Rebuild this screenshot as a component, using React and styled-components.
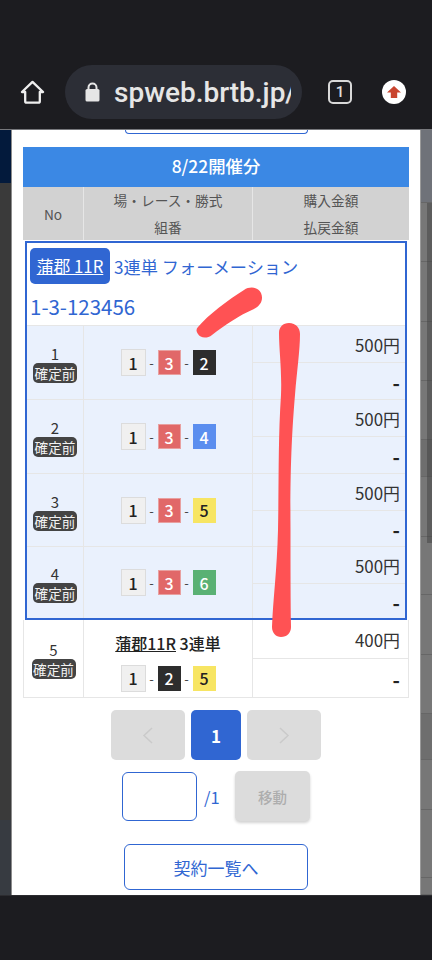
import React from "react";
import styled, { createGlobalStyle } from "styled-components";

const BLUE = "#3066d2";
const CJK = `"Noto Sans CJK JP", "Noto Sans", sans-serif`;

const boatColors = {
  1: { bg: "#f0f0f0", fg: "#222", line: "#dcdcdc" },
  2: { bg: "#2d2d2d", fg: "#fff", line: "#2d2d2d" },
  3: { bg: "#e16868", fg: "#fff", line: "#e8a0a0" },
  4: { bg: "#5b8eef", fg: "#fff", line: "#5b8eef" },
  5: { bg: "#f7e563", fg: "#222", line: "#f7e563" },
  6: { bg: "#5ab174", fg: "#fff", line: "#5ab174" }
};

const boxedRows = [
  { no: 1, boats: [1, 3, 2], height: 74 },
  { no: 2, boats: [1, 3, 4], height: 74 },
  { no: 3, boats: [1, 3, 5], height: 73 },
  { no: 4, boats: [1, 3, 6], height: 71 }
];

const rightBands = [
  { height: 73, tone: "#6f7279" },
  { height: 59 },
  { height: 60 },
  { height: 59 },
  { height: 59 },
  { height: 37, tone: "#6e6e6e" },
  { height: 60 },
  { height: 58 },
  { height: 60 },
  { height: 59 },
  { height: 46, tone: "#6e6e6e" },
  { height: 50 },
  { height: 68 },
  { height: 17 }
];

const GlobalStyle = createGlobalStyle`
  html, body {
    margin: 0;
    padding: 0;
    background: #1c1c20;
  }

  * {
    box-sizing: border-box;
  }
`;

const Boats = ({ boats }) => (
  <BoatRow>
    {boats.map((boat, index) => (
      <React.Fragment key={index}>
        {index > 0 && <Dash>-</Dash>}
        <Boat $color={boatColors[boat]} $first={boat === 1}>
          {boat}
        </Boat>
      </React.Fragment>
    ))}
  </BoatRow>
);

const Amounts = ({ price, topHeight, inset }) => (
  <AmountCol>
    <AmountCell $top $height={topHeight} $inset={inset}>
      {price}
    </AmountCell>
    <AmountCell $inset={inset}>
      <Minus>-</Minus>
    </AmountCell>
  </AmountCol>
);

const App = () => {
  return (
    <Page>
      <GlobalStyle />
      <TopBar>
        <IconSlot $width={25}>
          <svg width="26" height="26" viewBox="0 0 26 26" fill="none" stroke="#eee" strokeWidth="2.4" strokeLinejoin="round">
            <path d="M2 13 13 2.5 24 13h-3.4v9.5a1.5 1.5 0 0 1-1.5 1.5H6.9a1.5 1.5 0 0 1-1.5-1.5V13Z" />
          </svg>
        </IconSlot>
        <UrlPill>
          <svg width="15" height="20" viewBox="0 0 15 20">
            <path d="M3.5 8V5.5a4 4 0 0 1 8 0V8" fill="none" stroke="#e6e6e6" strokeWidth="2" />
            <rect x="0.5" y="7" width="14" height="12.5" rx="1.6" fill="#e6e6e6" />
          </svg>
          <UrlText>spweb.brtb.jp/</UrlText>
        </UrlPill>
        <TabCount>1</TabCount>
        <UpdateDot>
          <svg width="14" height="12" viewBox="0 0 14 12">
            <path d="M7 0 14 6.4H10.2V12H3.8V6.4H0Z" fill="#c9452f" />
          </svg>
        </UpdateDot>
      </TopBar>

      <Middle>
        <LeftGutter>
          <NavyBand />
          <GreyBand />
          <SlateBand />
        </LeftGutter>

        <Panel>
          <ClippedButton />
          <Table>
            <DateHead>8/22開催分</DateHead>
            <HeadRow>
              <HeadNo>No</HeadNo>
              <HeadMid>
                <HeadCell>場・レース・勝式</HeadCell>
                <HeadCell>組番</HeadCell>
              </HeadMid>
              <HeadAmount>
                <HeadCell>購入金額</HeadCell>
                <HeadCell>払戻金額</HeadCell>
              </HeadAmount>
            </HeadRow>

            <Highlight>
              <Summary>
                <SummaryLine>
                  <VenueChip>蒲郡 11R</VenueChip>
                  <BetType>3連単 フォーメーション</BetType>
                </SummaryLine>
                <BetNumbers>1-3-123456</BetNumbers>
              </Summary>
              {boxedRows.map(({ no, boats, height }) => (
                <Row key={no} $height={height} $tinted>
                  <NoCell $boxed>
                    <RowNo>{no}</RowNo>
                    <Status>確定前</Status>
                  </NoCell>
                  <MidCell>
                    <Boats boats={boats} />
                  </MidCell>
                  <Amounts price="500円" topHeight={37} inset={5} />
                </Row>
              ))}
            </Highlight>

            <Row $height={78} $closed>
              <NoCell>
                <RowNo>5</RowNo>
                <Status>確定前</Status>
              </NoCell>
              <MidCell $stacked>
                <PlainRace>
                  <u>蒲郡11R</u> 3連単
                </PlainRace>
                <Boats boats={[1, 2, 5]} />
              </MidCell>
              <Amounts price="400円" topHeight={39} inset={8} />
            </Row>
          </Table>

          <Pager>
            <PageButton $width={74}>
              <svg width="12" height="17" viewBox="0 0 12 17" fill="none" stroke="#cacaca" strokeWidth="1.5">
                <path d="M10 1 2 8.5 10 16" />
              </svg>
            </PageButton>
            <PageButton $width={50} $active>
              1
            </PageButton>
            <PageButton $width={74}>
              <svg width="12" height="17" viewBox="0 0 12 17" fill="none" stroke="#cacaca" strokeWidth="1.5">
                <path d="M2 1 10 8.5 2 16" />
              </svg>
            </PageButton>
          </Pager>

          <JumpRow>
            <JumpInput />
            <JumpTotal>/1</JumpTotal>
            <JumpButton>移動</JumpButton>
          </JumpRow>

          <ListButton>契約一覧へ</ListButton>
        </Panel>

        <RightGutter>
          <Bands>
            {rightBands.map(({ height, tone }, index) => (
              <Band key={index} style={{ height: height }} $tone={tone} />
            ))}
          </Bands>
          <ScrollThumb />
        </RightGutter>
      </Middle>

      <BottomBar />

      <Scribble viewBox="0 0 432 960" aria-hidden="true">
        <path d="M198 327C208 315 228 300 244 290C250 286 258 287 261 293C264 300 260 306 254 309C238 316 225 325 212 335C207 339 200 338 198 334C196 331 196 329 198 327Z" />
        <path d="M279 333C279 327 283 323 289 323C296 323 300 328 300 334C300 350 297 370 295 395C292 430 290 470 290.5 530C290.5 570 290.5 600 291 627C291 633 287 637 281 637C276 637 272 633 272 627C273 600 277 570 278 530C279 480 278 440 281 395C282 370 279 350 279 333Z" />
      </Scribble>
    </Page>
  );
};

export default App;

const Page = styled.div`
  position: relative;
  width: 432px;
  height: 960px;
  display: flex;
  flex-direction: column;
  overflow: hidden;
  font-family: ${CJK};
`;

const TopBar = styled.div`
  height: 130px;
  flex: none;
  display: flex;
  align-items: flex-start;
  padding: 65px 0 0 20px;
  background: #1c1c20;
  border-bottom: 1px solid #77787c;
`;

const IconSlot = styled.div`
  width: ${props => props.$width}px;
  height: 54px;
  display: flex;
  align-items: center;
  justify-content: center;
`;

const UrlPill = styled.div`
  width: 237px;
  height: 54px;
  margin-left: 20px;
  padding: 0 11px 0 20px;
  display: flex;
  align-items: center;
  gap: 14px;
  overflow: hidden;
  border-radius: 27px;
  background: #2c2e36;

  svg {
    flex: none;
  }
`;

const UrlText = styled.span`
  font-family: Roboto, sans-serif;
  font-size: 28px;
  font-weight: 500;
  color: #e6e6e6;
  white-space: nowrap;
  overflow: hidden;
`;

const TabCount = styled.div`
  width: 24px;
  height: 24px;
  margin: 15px 0 0 26px;
  display: flex;
  align-items: center;
  justify-content: center;
  border: 2px solid #d8d8d8;
  border-radius: 5px;
  font-family: Roboto, sans-serif;
  font-size: 15px;
  font-weight: 500;
  color: #e0e0e0;
`;

const UpdateDot = styled.div`
  width: 24px;
  height: 24px;
  margin: 15px 0 0 30px;
  display: flex;
  align-items: center;
  justify-content: center;
  border-radius: 50%;
  background: #fff;
`;

const Middle = styled.div`
  flex: 1;
  display: flex;
  min-height: 0;
`;

const LeftGutter = styled.div`
  width: 11px;
  flex: none;
  display: flex;
  flex-direction: column;
`;

const NavyBand = styled.div`
  height: 53px;
  background: #031a3c;
`;

const GreyBand = styled.div`
  flex: 1;
  background: #3a3a3a;
`;

const SlateBand = styled.div`
  height: 75px;
  background: #373b41;
`;

const Panel = styled.div`
  width: 410px;
  flex: none;
  display: flex;
  flex-direction: column;
  align-items: center;
  overflow: hidden;
  background: #fff;
  border-left: 1px solid #8c8c8c;
  border-right: 1px solid #9a9a9a;
`;

const ClippedButton = styled.div`
  width: 183px;
  height: 4px;
  flex: none;
  border: 1px solid ${BLUE};
  border-top: 0;
  border-radius: 0 0 5px 5px;
`;

const Table = styled.div`
  width: 386px;
  margin-top: 13px;
  flex: none;
`;

const DateHead = styled.div`
  height: 40px;
  padding-bottom: 3px;
  display: flex;
  align-items: center;
  justify-content: center;
  background: #3b88e4;
  font-size: 17.4px;
  font-weight: 500;
  color: #fff;
`;

const HeadRow = styled.div`
  height: 53px;
  display: flex;
  background: #d2d2d2;
  font-size: 13.7px;
  color: #555;
`;

const HeadNo = styled.div`
  width: 61px;
  display: flex;
  align-items: center;
  justify-content: center;
  border-right: 1px solid #e6e6e6;
`;

const HeadMid = styled.div`
  width: 169px;
  display: flex;
  flex-direction: column;
  border-right: 1px solid #e6e6e6;
`;

const HeadAmount = styled.div`
  flex: 1;
  display: flex;
  flex-direction: column;
`;

const HeadCell = styled.div`
  flex: 1;
  display: flex;
  align-items: center;
  justify-content: center;

  :first-child {
    border-bottom: 1px solid #e6e6e6;
  }
`;

const Highlight = styled.div`
  margin: 1px 2px 0;
  border: 2px solid ${BLUE};
`;

const Summary = styled.div`
  height: 83px;
  padding: 5px 0 0 3px;
  background: #fff;
  border-bottom: 1px solid #e6e6e6;
  color: ${BLUE};
`;

const SummaryLine = styled.div`
  display: flex;
  align-items: center;
  gap: 4px;
`;

const VenueChip = styled.span`
  width: 80px;
  height: 36px;
  padding-bottom: 1px;
  display: flex;
  align-items: center;
  justify-content: center;
  border-radius: 5px;
  background: ${BLUE};
  font-size: 16.8px;
  color: #fff;
  text-decoration: underline;
`;

const BetType = styled.span`
  font-size: 17.2px;
  white-space: nowrap;
`;

const BetNumbers = styled.div`
  margin-top: 7px;
  font-size: 20.5px;
  line-height: 30px;
`;

const Row = styled.div`
  height: ${props => props.$height}px;
  display: flex;
  background: ${props => (props.$tinted ? "#eaf1fd" : "#fff")};
  border-bottom: 1px solid #e6e6e6;
  border-right: ${props => (props.$closed ? "1px solid #e6e6e6" : "0")};

  ${Highlight} &:last-child {
    border-bottom: 0;
  }
`;

const NoCell = styled.div`
  width: ${props => (props.$boxed ? 57 : 61)}px;
  flex: none;
  display: flex;
  flex-direction: column;
  align-items: center;
  justify-content: center;
  padding-top: 3px;
  border-right: 1px solid #e6e6e6;
  border-left: ${props => (props.$boxed ? "0" : "1px solid #e6e6e6")};
`;

const RowNo = styled.div`
  font-size: 15px;
  line-height: 18px;
  color: #333;
`;

const Status = styled.div`
  width: 44px;
  height: 20px;
  display: flex;
  align-items: center;
  justify-content: center;
  border-radius: 5px;
  background: #444;
  font-size: 13.6px;
  white-space: nowrap;
  color: #f2f2f2;
`;

const MidCell = styled.div`
  width: 169px;
  flex: none;
  display: flex;
  flex-direction: column;
  align-items: center;
  justify-content: center;
  gap: ${props => (props.$stacked ? "11px" : "0")};
  padding-top: ${props => (props.$stacked ? "6px" : "0")};
  border-right: 1px solid #e6e6e6;
`;

const PlainRace = styled.div`
  font-size: 16px;
  font-weight: 500;
  line-height: 22px;
  color: #222;
`;

const BoatRow = styled.div`
  display: flex;
  align-items: center;
`;

const Dash = styled.span`
  width: 12px;
  text-align: center;
  font-size: 13px;
  color: #444;
`;

const Boat = styled.span`
  width: ${props => (props.$first ? 25 : 23)}px;
  height: ${props => (props.$first ? 27 : 25)}px;
  display: flex;
  align-items: center;
  justify-content: center;
  border: 1px solid ${props => props.$color.line};
  background: ${props => props.$color.bg};
  font-size: 16px;
  font-weight: 500;
  color: ${props => props.$color.fg};
`;

const AmountCol = styled.div`
  flex: 1;
  display: flex;
  flex-direction: column;
`;

const AmountCell = styled.div`
  height: ${props => (props.$top ? `${props.$height}px` : "auto")};
  flex: ${props => (props.$top ? "none" : "1")};
  display: flex;
  align-items: center;
  justify-content: flex-end;
  padding-right: ${props => props.$inset}px;
  border-bottom: ${props => (props.$top ? "1px solid #e6e6e6" : "0")};
  font-size: 16.9px;
  color: #333;
`;

const Minus = styled.span`
  margin-top: 2px;
  font-size: 20px;
  font-weight: 700;
  color: #222;
`;

const Pager = styled.div`
  margin-top: 12px;
  display: flex;
  gap: 6px;
`;

const PageButton = styled.div`
  width: ${props => props.$width}px;
  height: 50px;
  display: flex;
  align-items: center;
  justify-content: center;
  border-radius: 5px;
  background: ${props => (props.$active ? BLUE : "#dcdcdc")};
  font-size: 17px;
  font-weight: 700;
  color: #fff;
`;

const JumpRow = styled.div`
  width: 188px;
  margin-top: 11px;
  display: flex;
  align-items: center;
`;

const JumpInput = styled.div`
  width: 75px;
  height: 49px;
  flex: none;
  border: 1.5px solid ${BLUE};
  border-radius: 6px;
`;

const JumpTotal = styled.span`
  width: 38px;
  padding: 2px 0 0 7px;
  font-size: 16.5px;
  color: ${BLUE};
`;

const JumpButton = styled.div`
  width: 75px;
  height: 50px;
  flex: none;
  display: flex;
  align-items: center;
  justify-content: center;
  border-radius: 5px;
  background: #dcdcdc;
  box-shadow: 0 2px 3px rgba(0, 0, 0, 0.18);
  font-size: 14.5px;
  font-weight: 500;
  color: #adadad;
`;

const ListButton = styled.div`
  width: 184px;
  height: 46px;
  margin-top: 23px;
  flex: none;
  display: flex;
  align-items: center;
  justify-content: center;
  border: 1.5px solid ${BLUE};
  border-radius: 6px;
  font-size: 17px;
  color: ${BLUE};
`;

const RightGutter = styled.div`
  position: relative;
  flex: 1;
`;

const Bands = styled.div`
  display: flex;
  flex-direction: column;
`;

const Band = styled.div`
  background: ${props => props.$tone || "#777"};
  border-bottom: 1px solid #666;
`;

const ScrollThumb = styled.div`
  position: absolute;
  top: 73px;
  right: 0;
  width: 5px;
  height: 340px;
  background: rgba(60, 60, 60, 0.45);
`;

const BottomBar = styled.div`
  height: 65px;
  flex: none;
  background: #1c1c20;
  border-top: 1px solid #2c2c30;
`;

const Scribble = styled.svg`
  position: absolute;
  top: 0;
  left: 0;
  width: 432px;
  height: 960px;
  fill: #ff5254;
  pointer-events: none;
`;
